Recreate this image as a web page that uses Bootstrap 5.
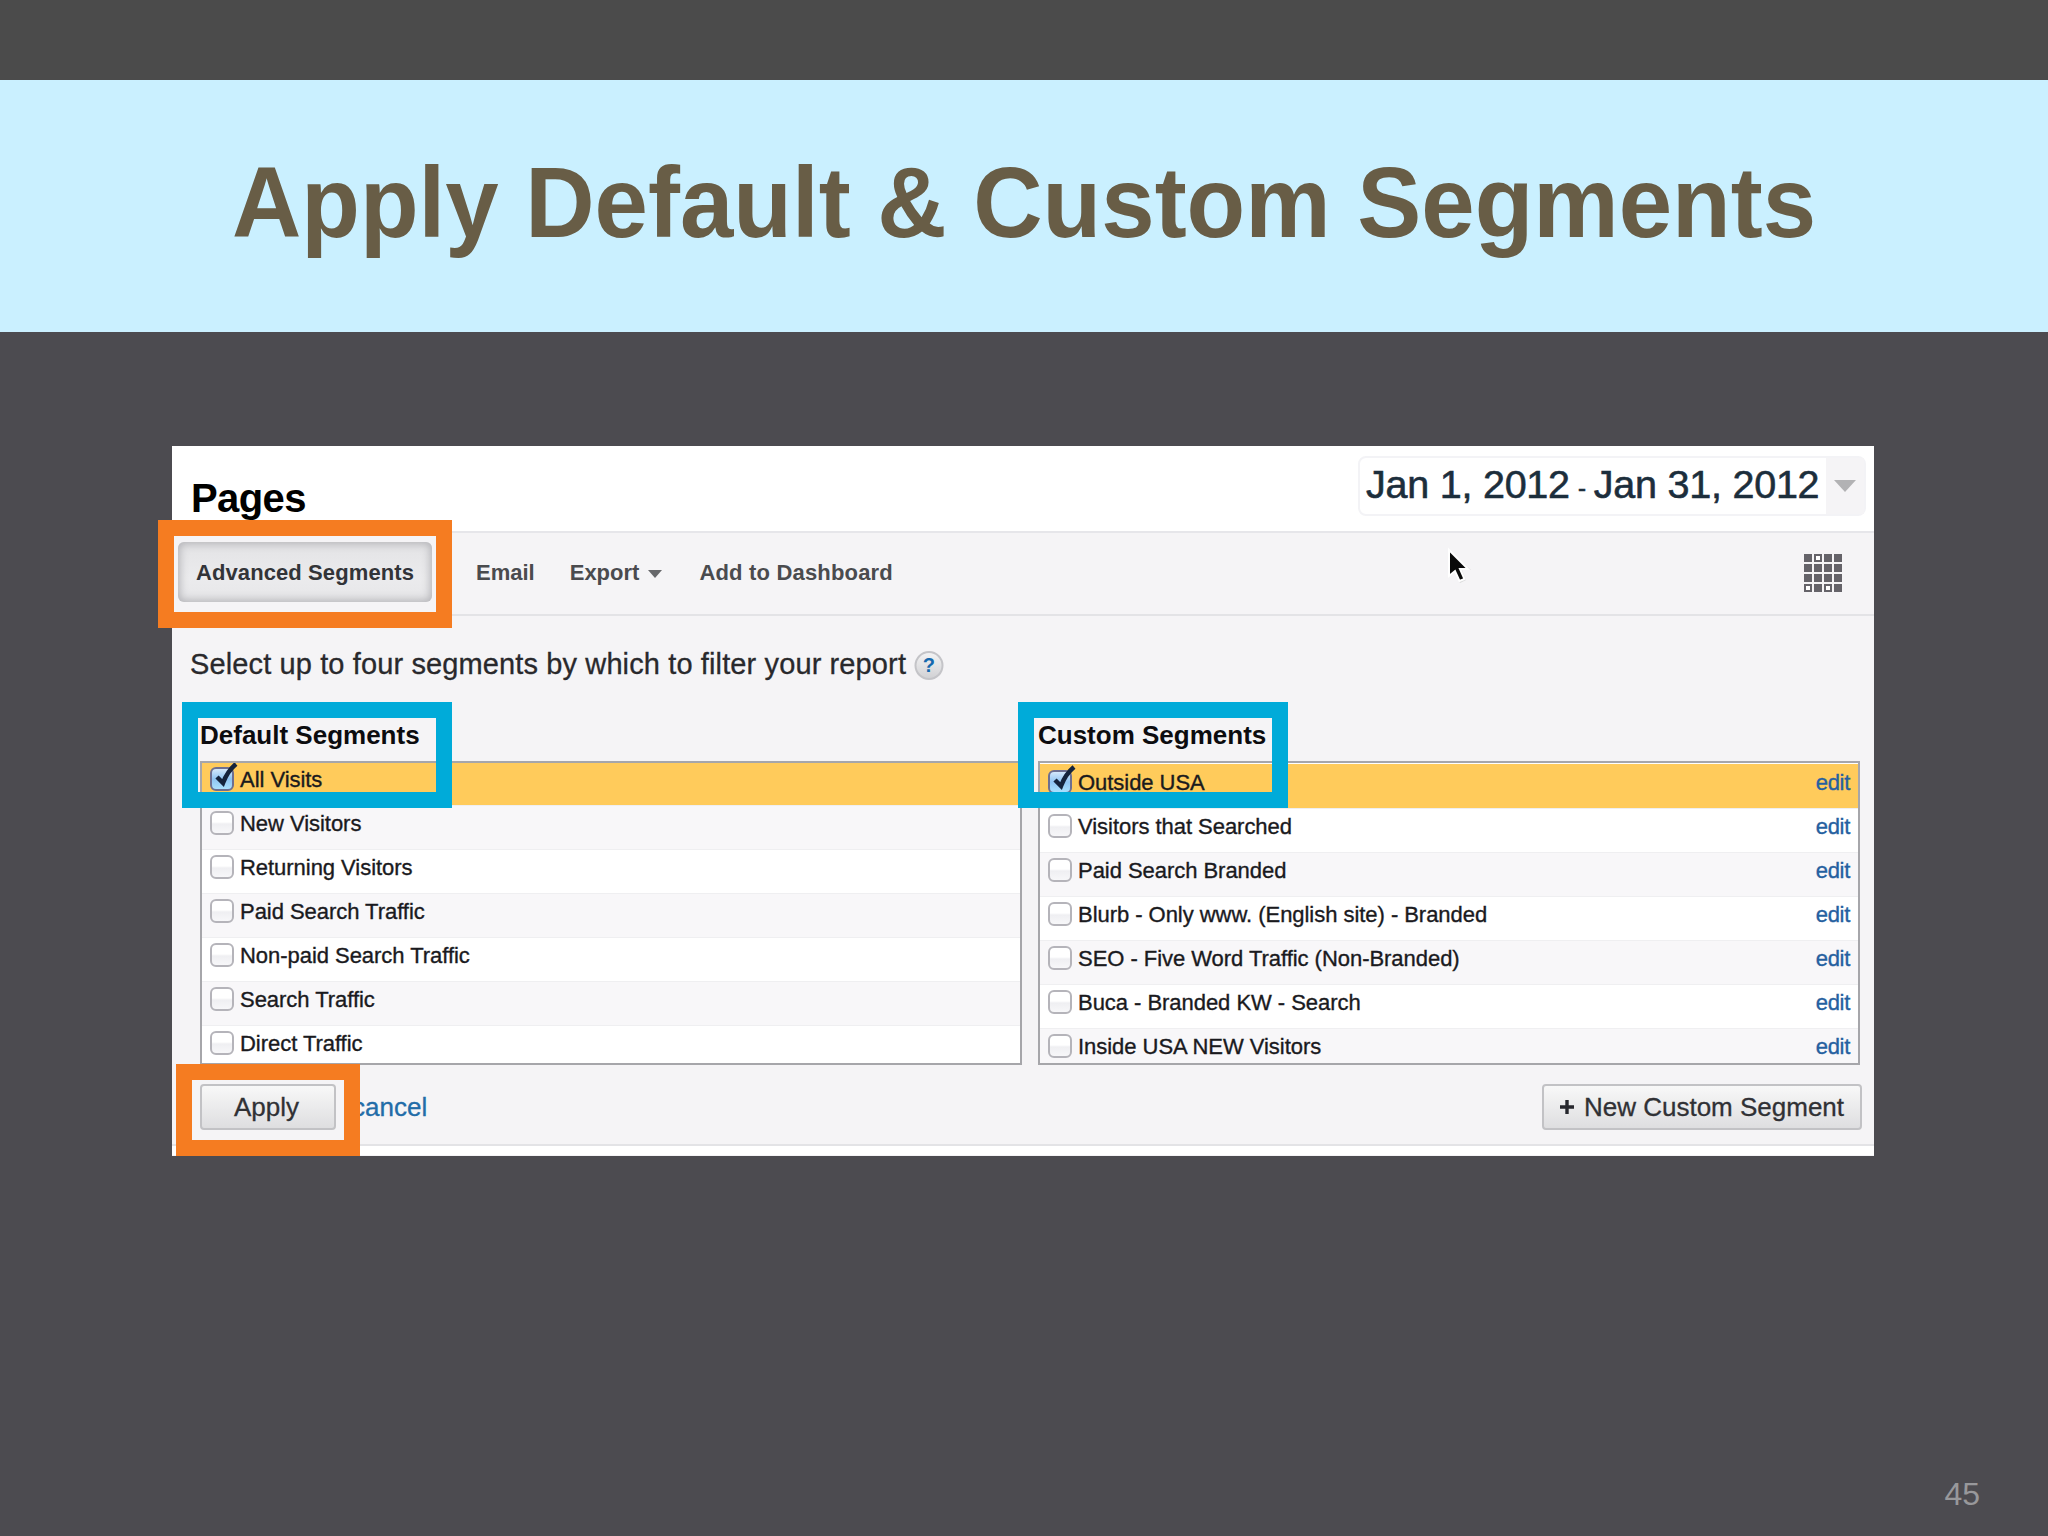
<!DOCTYPE html>
<html lang="en">
<head>
<meta charset="utf-8">
<meta name="viewport" content="width=device-width, initial-scale=1">
<title>Apply Default &amp; Custom Segments</title>
<link rel="stylesheet" href="https://cdn.jsdelivr.net/npm/bootstrap@5.3.0/dist/css/bootstrap.min.css">
<style>
body{font-family:"Liberation Sans",Arial,sans-serif;background:#4c4c4f;color:#111;line-height:1}
.slide{width:2048px;height:1536px;background:#4c4b50}
.slide-top{height:80px;background:#4b4b4b}
.slide-title{height:252px;background:#caf0ff}
.slide-title h1{font-size:96px;color:#685d46;line-height:1;padding-bottom:7px;white-space:nowrap}
.slide-title h1 span{display:inline-block;transform:scaleY(1.045)}
.slide-number{font-size:32px;color:#98989b;right:68px;bottom:25px;line-height:34px}
.report{width:1702px;height:710px;margin:114px 0 0 172px;background:#f5f4f6}
.report-head{height:87px;background:#fff;border-bottom:2px solid #e6e6ea;padding:10px 8px 0 19px}
.report-head h2{font-size:40px;color:#000;line-height:40px;padding-top:22px;letter-spacing:-.6px}
.date-range{width:508px;height:60px;border:2px solid #f3f3f6;border-radius:8px;font-size:39.5px;color:#1c2e3c;padding-left:6px;-webkit-text-stroke:.6px}
.date-range .dates{line-height:52px;white-space:nowrap;letter-spacing:-.24px}
.date-range .dash{font-size:24px;width:24px;text-align:center;line-height:60px;-webkit-text-stroke:.6px}
.date-drop{width:38px;background:#f5f4f6}
.toolbar-row{height:83px;border-bottom:2px solid #e3e3e6;font-size:22px;font-weight:700;color:#4a4b4e;padding-left:6px;line-height:25px}
.adv{width:254px;height:60px;border-radius:6px;background:linear-gradient(#e3e3e5,#ebebed 60%,#e6e6e8);box-shadow:inset 0 0 9px 2px #b4b4b8;color:#323438;margin-top:-3px;letter-spacing:.1px}
.tool{margin-top:-3px;white-space:nowrap}
.tool-email{margin-left:44px}
.tool-export{margin-left:35px}
.tool-dash{margin-left:36px;letter-spacing:.18px}
.prompt{font-size:29px;line-height:34px;color:#29292c;padding:31px 0 0 18px;height:104px;letter-spacing:.12px;-webkit-text-stroke:.3px}
.help-dot{width:30px;height:30px}
.segs{padding:0 13px 0 28px;gap:16px}
.seg-col{width:822px}
.seg-col h3{font-size:26px;line-height:30px;height:41px;color:#0c0c0f;margin:0}
.seg-list{height:304px;border:2px solid #a6a6aa;background:#fff;font-size:22px;color:#1a1a1e;-webkit-text-stroke:.35px}
.seg-row{height:44px;flex:none;border-top:1px solid #efeff1;padding:0 8px 9px 8px;background:#fff}
.seg-row.shade{background:#f8f7f9}
.seg-row.picked{background:#ffcb5b;border-top-color:#ffcb5b}
.first-tight{height:42px;padding-bottom:11px}
.seg-list.lower{padding-top:1px}
.seg-row span{padding-left:6px;line-height:25px;padding-top:1px;white-space:nowrap;letter-spacing:-.04px}
.box{width:24px;height:24px;border:2px solid #b5b4ba;border-radius:6px;background:linear-gradient(#fff 45%,#efeff2 55%,#f7f7f9);margin-top:-1px}
.box.on{border-color:#6d6f91;background:linear-gradient(#d4e8fb,#8fc4f2 50%,#a9e0fd)}
.box svg{left:2px;top:-8px}
.seg-row a,.cancel-link{color:#2560a0;text-decoration:none}
.seg-row a{padding-top:2px;letter-spacing:-.3px}
.actions{height:81px;padding:19px 12px 0 28px;border-bottom:2px solid #e3e3e6}
.gbtn{height:46px;border:2px solid #c2c2c5;border-radius:4px;background:linear-gradient(#f8f8f8,#dedee0);font-size:26px;color:#303135;-webkit-text-stroke:.3px;line-height:30px;white-space:nowrap;padding:0}
.apply-btn{width:136px;padding-right:3px}
.new-btn{width:320px;padding-right:2px}
.cancel-link{color:#226ca8;font-size:26px;margin-left:16px;line-height:46px;-webkit-text-stroke:.3px}
.callout{border:16px solid #f57c21;pointer-events:none}
.callout.blue{border-color:#00abd9}
.c1{left:-14px;top:74px;width:294px;height:108px}
.c2{left:10px;top:256px;width:270px;height:106px}
.c3{left:846px;top:256px;width:270px;height:106px}
.c4{left:4px;top:618px;width:184px;height:92px}
.pointer{left:1273px;top:101px}
</style>
<script src="https://cdn.jsdelivr.net/npm/bootstrap@5.3.0/dist/js/bootstrap.bundle.min.js"></script>
</head>
<body class="m-0 overflow-hidden">
<main class="slide position-relative overflow-hidden">
  <div class="slide-top"></div>
  <header class="slide-title d-flex align-items-center justify-content-center">
    <h1 class="fw-bold m-0"><span>Apply Default &amp; Custom Segments</span></h1>
  </header>

  <section class="report position-relative">
    <div class="report-head d-flex justify-content-between align-items-start">
      <h2 class="fw-bold m-0">Pages</h2>
      <div class="date-range d-flex justify-content-between">
        <div class="dates d-flex"><span>Jan 1, 2012</span><span class="dash">-</span><span>Jan 31, 2012</span></div>
        <div class="date-drop d-flex align-items-center justify-content-center">
          <svg width="22" height="12" viewBox="0 0 22 12"><path d="M0 0H22L11 12Z" fill="#b2b2b4"/></svg>
        </div>
      </div>
    </div>

    <nav class="toolbar-row d-flex align-items-center">
      <div class="adv d-flex align-items-center justify-content-center">Advanced Segments</div>
      <div class="tool tool-email">Email</div>
      <div class="tool tool-export d-flex align-items-center">Export
        <svg class="ms-2 mt-1" width="16" height="9" viewBox="0 0 16 9"><path d="M1 0H15L8 8Z" fill="#67686b"/></svg>
      </div>
      <div class="tool tool-dash">Add to Dashboard</div>
      <svg class="ms-auto me-4" width="54" height="40" viewBox="-8 0 54 40">
        <g fill="#656369">
          <path d="M0 0h8v8h-8zM20 0h8v8h-8zM30 0h8v8h-8zM0 10h8v8h-8zM10 10h8v8h-8zM20 10h8v8h-8zM30 10h8v8h-8zM0 20h8v8h-8zM10 20h8v8h-8zM20 20h8v8h-8zM30 20h8v8h-8zM10 30h8v8h-8zM30 30h8v8h-8z"/>
        </g>
        <g fill="#fff" stroke="#656369" stroke-width="2"><path d="M11 1h6v6h-6zM1 31h6v6h-6zM21 31h6v6h-6z"/></g>
      </svg>
    </nav>

    <div class="prompt d-flex align-items-start"><span>Select up to four segments by which to filter your report</span>
      <svg class="help-dot ms-2 mt-1" viewBox="0 0 30 30">
        <defs><linearGradient id="hg" x2="0" y2="1"><stop stop-color="#f4f4f5"/><stop offset="1" stop-color="#d0d0d3"/></linearGradient></defs>
        <circle cx="15" cy="14.500" r="13.500" fill="url(#hg)" stroke="#c4c4c8" stroke-width="2"/>
        <text x="15" y="21" text-anchor="middle" font-family="Liberation Sans" font-weight="700" font-size="20" fill="#1569ae">?</text>
      </svg>
    </div>

    <div class="segs d-flex">
      <div class="seg-col">
        <h3 class="fw-bold">Default Segments</h3>
        <div class="seg-list d-flex flex-column overflow-hidden">
          <div class="seg-row picked first-tight d-flex align-items-center"><i class="box on position-relative"><svg class="position-absolute" width="26" height="30" viewBox="0 0 26 30"><path d="M3 16L9 22C12 14 16 8 22 3" fill="none" stroke="#14233c" stroke-width="4.5"/></svg></i><span>All Visits</span></div>
          <div class="seg-row shade d-flex align-items-center"><i class="box"></i><span>New Visitors</span></div>
          <div class="seg-row d-flex align-items-center"><i class="box"></i><span>Returning Visitors</span></div>
          <div class="seg-row shade d-flex align-items-center"><i class="box"></i><span>Paid Search Traffic</span></div>
          <div class="seg-row d-flex align-items-center"><i class="box"></i><span>Non-paid Search Traffic</span></div>
          <div class="seg-row shade d-flex align-items-center"><i class="box"></i><span>Search Traffic</span></div>
          <div class="seg-row d-flex align-items-center"><i class="box"></i><span>Direct Traffic</span></div>
        </div>
      </div>
      <div class="seg-col">
        <h3 class="fw-bold">Custom Segments</h3>
        <div class="seg-list lower d-flex flex-column overflow-hidden">
          <div class="seg-row picked d-flex align-items-center"><i class="box on position-relative"><svg class="position-absolute" width="26" height="30" viewBox="0 0 26 30"><path d="M3 16L9 22C12 14 16 8 22 3" fill="none" stroke="#14233c" stroke-width="4.5"/></svg></i><span>Outside USA</span><a class="ms-auto" href="#">edit</a></div>
          <div class="seg-row d-flex align-items-center"><i class="box"></i><span>Visitors that Searched</span><a class="ms-auto" href="#">edit</a></div>
          <div class="seg-row shade d-flex align-items-center"><i class="box"></i><span>Paid Search Branded</span><a class="ms-auto" href="#">edit</a></div>
          <div class="seg-row d-flex align-items-center"><i class="box"></i><span>Blurb - Only www. (English site) - Branded</span><a class="ms-auto" href="#">edit</a></div>
          <div class="seg-row shade d-flex align-items-center"><i class="box"></i><span>SEO - Five Word Traffic (Non-Branded)</span><a class="ms-auto" href="#">edit</a></div>
          <div class="seg-row d-flex align-items-center"><i class="box"></i><span>Buca - Branded KW - Search</span><a class="ms-auto" href="#">edit</a></div>
          <div class="seg-row shade d-flex align-items-center"><i class="box"></i><span>Inside USA NEW Visitors</span><a class="ms-auto" href="#">edit</a></div>
        </div>
      </div>
    </div>

    <div class="actions d-flex align-items-start">
      <button class="gbtn apply-btn" type="button">Apply</button>
      <a class="cancel-link" href="#">cancel</a>
      <button class="gbtn new-btn ms-auto d-flex align-items-center justify-content-center" type="button">
        <svg class="me-2" width="18" height="14" viewBox="0 0 18 14"><path d="M2 7H16M9 0V14" stroke="#26272d" stroke-width="3.4"/></svg>New Custom Segment</button>
    </div>
    <div class="bg-white" style="height:9px"></div>

    <div class="callout c1 position-absolute"></div>
    <div class="callout blue c2 position-absolute"></div>
    <div class="callout blue c3 position-absolute"></div>
    <div class="callout c4 position-absolute"></div>
    <svg class="pointer position-absolute" width="28" height="40" viewBox="0 0 28 40">
      <path d="M3 3V31L10 25L15 36L21 33L17 23H26Z" fill="#aaa" opacity=".35"/>
      <path d="M4 3V29L10 24L14.500 34L19.500 32L15 22H23Z" fill="#0a0a0a" stroke="#fff" stroke-width="2"/>
    </svg>
  </section>

  <div class="slide-number position-absolute">45</div>
</main>
</body>
</html>
